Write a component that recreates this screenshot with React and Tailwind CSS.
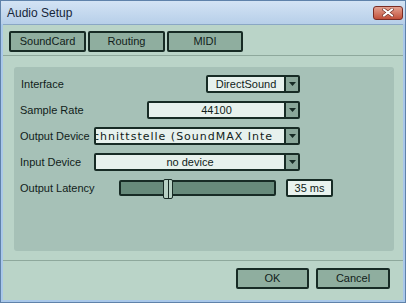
import React from "react";

const font = { fontFamily: "'Liberation Sans', Arial, sans-serif" };

function Arrow() {
  return (
    <div className="w-[14px] h-full flex items-center justify-center bg-[#8aa79a] border-l-2 border-[#172b25]">
      <svg width="7" height="4" viewBox="0 0 7 4">
        <path d="M0 0 H7 L3.5 4 Z" fill="#172b25" />
      </svg>
    </div>
  );
}

function Dropdown({ width, children }) {
  return (
    <div className={`${width} h-[18px] flex border-2 border-[#172b25] rounded-[2px] bg-[#e7f1ed] overflow-hidden`}>
      <div className="flex-1 flex items-center justify-center overflow-hidden whitespace-nowrap text-[11px] text-[#111d1a] leading-none">
        {children}
      </div>
      <Arrow />
    </div>
  );
}

function GreenButton({ width, children }) {
  return (
    <div className={`${width} h-[21px] flex items-center justify-center border-2 border-[#172b25] rounded-[2px] bg-[#8fae9f] text-[11px] text-[#111d1a]`}>
      {children}
    </div>
  );
}

export default function App() {
  return (
    <div className="w-[406px] h-[303px] flex flex-col bg-[#a9c8ea] border border-[#5f82aa]" style={font}>
      {/* title bar */}
      <div className="h-[23px] flex items-center justify-between pl-[6px] pr-[2px] bg-gradient-to-b from-[#d3e3f4] to-[#b7cfe9]">
        <span className="text-[12px] text-[#17263a]">Audio Setup</span>
        <div className="w-[30px] h-[14px] flex items-center justify-center rounded-[3px] border border-[#7a2c24] bg-gradient-to-b from-[#e3a191] to-[#c14f3a]">
          <svg width="12" height="9" viewBox="0 0 12 9">
            <path d="M2 1.5 L10 7.5 M10 1.5 L2 7.5" stroke="#6a2820" strokeWidth="3.2" strokeLinecap="square" />
            <path d="M2 1.5 L10 7.5 M10 1.5 L2 7.5" stroke="#ffffff" strokeWidth="2" strokeLinecap="square" />
          </svg>
        </div>
      </div>

      {/* client */}
      <div className="flex-1 flex flex-col mx-[2px] mb-[2px] bg-[#bad4c8] border-t border-[#8aa7c4]">
        <div className="flex gap-[2px] mt-[6px] ml-[6px]">
          <GreenButton width="w-[77px]">SoundCard</GreenButton>
          <GreenButton width="w-[77px]">Routing</GreenButton>
          <GreenButton width="w-[76px]">MIDI</GreenButton>
        </div>
        <div className="mt-[3px] border-t border-[#8ea89c]" />

        <div className="mt-[11px] ml-[11px] w-[380px] h-[184px] rounded-[3px] bg-[#a6c1b7] pt-[8px] flex flex-col gap-[8px] text-[11px] text-[#111d1a]">
          <div className="h-[18px] flex items-center">
            <span className="w-[192px] pl-[7px]">Interface</span>
            <Dropdown width="w-[94px]">DirectSound</Dropdown>
          </div>
          <div className="h-[18px] flex items-center">
            <span className="w-[133px] pl-[6px]">Sample Rate</span>
            <Dropdown width="w-[153px]">44100</Dropdown>
          </div>
          <div className="h-[18px] flex items-center">
            <span className="w-[80px] pl-[6px] whitespace-nowrap">Output Device</span>
            <div className="w-[206px] h-[18px] flex border-2 border-[#172b25] rounded-[2px] bg-[#e7f1ed] overflow-hidden">
              <div className="flex-1 flex items-center overflow-hidden whitespace-nowrap leading-none">
                <span className="-ml-[11px] tracking-[1px]" style={{ fontFamily: "'DejaVu Sans', sans-serif" }}>Schnittstelle (SoundMAX Inte</span>
              </div>
              <Arrow />
            </div>
          </div>
          <div className="h-[18px] flex items-center">
            <span className="w-[80px] pl-[6px]">Input Device</span>
            <Dropdown width="w-[206px]">no device</Dropdown>
          </div>
          <div className="h-[18px] flex items-center">
            <span className="w-[105px] pl-[6px]">Output Latency</span>
            <div className="relative w-[157px] h-[16px] rounded-[2px] border-2 border-[#172b25] bg-[#678a7b]">
              <div className="absolute left-[42px] -top-[3px] w-[10px] h-[20px] rounded-[2px] border border-[#172b25] bg-[#b7d1c4] flex justify-center">
                <div className="w-px h-full bg-[#172b25]" />
              </div>
            </div>
            <div className="ml-[10px] w-[47px] h-[18px] flex items-center justify-center border-2 border-[#172b25] rounded-[2px] bg-[#eaf3ef]">
              35 ms
            </div>
          </div>
        </div>

        <div className="mt-[9px] border-t border-[#8ea89c]" />
        <div className="flex justify-end gap-[7px] mt-[7px] mr-[13px]">
          <GreenButton width="w-[73px]">OK</GreenButton>
          <GreenButton width="w-[74px]">Cancel</GreenButton>
        </div>
      </div>
    </div>
  );
}
